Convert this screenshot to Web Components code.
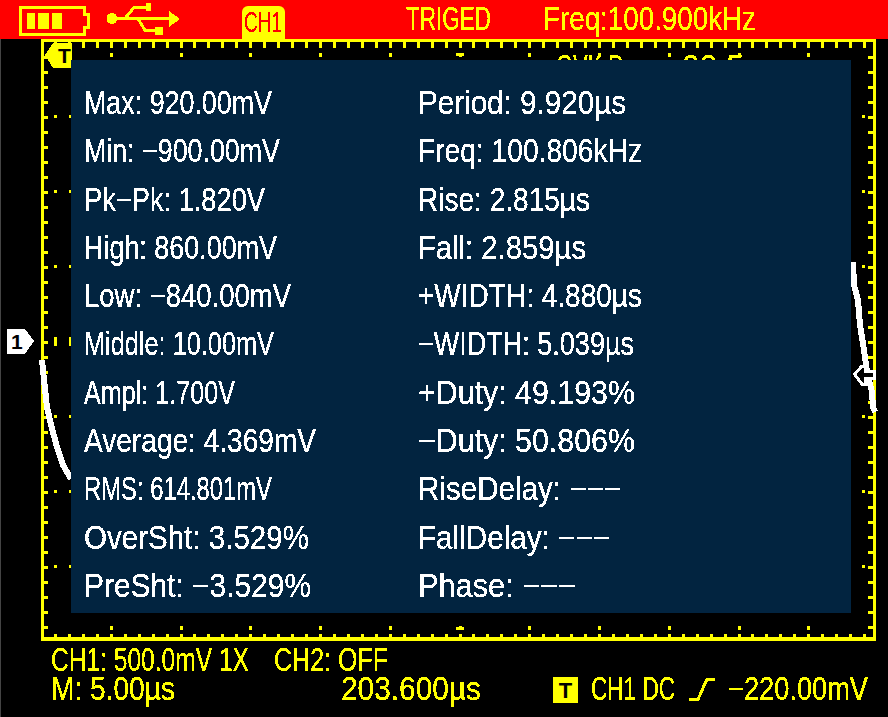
<!DOCTYPE html>
<html>
<head>
<meta charset="utf-8">
<title>Scope measurements</title>
<style>
	html, body { margin: 0; background: #000; }
	body { font-family: "Liberation Sans", sans-serif; }
</style>
</head>
<body>
<osc-screen>
	<osc-header slot="header"></osc-header>
	<osc-plot slot="plot">
		<osc-readout>
			<osc-text w="188">Max: 920.00mV</osc-text><osc-text w="208">Period: 9.920µs</osc-text>
			<osc-text w="196">Min: −900.00mV</osc-text><osc-text w="224">Freq: 100.806kHz</osc-text>
			<osc-text w="181">Pk−Pk: 1.820V</osc-text><osc-text w="172">Rise: 2.815µs</osc-text>
			<osc-text w="193">High: 860.00mV</osc-text><osc-text w="168">Fall: 2.859µs</osc-text>
			<osc-text w="207">Low: −840.00mV</osc-text><osc-text w="224">+WIDTH: 4.880µs</osc-text>
			<osc-text w="190">Middle: 10.00mV</osc-text><osc-text w="216">−WIDTH: 5.039µs</osc-text>
			<osc-text w="151">Ampl: 1.700V</osc-text><osc-text w="217">+Duty: 49.193%</osc-text>
			<osc-text w="232">Average: 4.369mV</osc-text><osc-text w="217">−Duty: 50.806%</osc-text>
			<osc-text w="188">RMS: 614.801mV</osc-text><osc-text w="203">RiseDelay: −−−</osc-text>
			<osc-text w="225">OverSht: 3.529%</osc-text><osc-text w="192">FallDelay: −−−</osc-text>
			<osc-text w="227">PreSht: −3.529%</osc-text><osc-text w="158">Phase: −−−</osc-text>
		</osc-readout>
	</osc-plot>
	<osc-footer slot="footer"></osc-footer>
</osc-screen>

<script>
'use strict'

// text squeezed to the width it has on the scope, the filter hardens the edges like the lcd font
class OscText extends HTMLElement {
	constructor() {
		super()
		this.attachShadow({ mode: 'open' }).innerHTML = `
			<style>
				:host {
					display: block;
					height: var(--lh, 29px);
					line-height: var(--lh, 29px);
					font-family: "Liberation Sans", sans-serif;
					font-size: var(--fs, 33px);
					white-space: nowrap;
				}
				div { filter: url(#lcd); }
				span {
					display: inline-block;
					transform-origin: 0 0;
				}
			</style>
			<svg width="0" height="0" style="position:absolute">
				<filter id="lcd" filterUnits="userSpaceOnUse" x="-6" y="-12" width="300" height="72" color-interpolation-filters="sRGB">
					<feGaussianBlur in="SourceGraphic" stdDeviation="0.500"/>
					<feComponentTransfer>
						<feFuncA type="discrete" tableValues="0 1 1"/>
					</feComponentTransfer>
				</filter>
			</svg>
			<div><span><slot></slot></span></div>`
	}

	connectedCallback() {
		const w = Number(this.getAttribute('w'))
		this.style.width = `${w}px`
		const span = this.shadowRoot.querySelector('span')
		span.style.transform = `scaleX(${w / span.getBoundingClientRect().width})`
	}
}

class OscScreen extends HTMLElement {
	constructor() {
		super()
		this.attachShadow({ mode: 'open' }).innerHTML = `
			<style>
				:host {
					display: flex;
					flex-direction: column;
					width: 888px;
					height: 717px;
					background: #000;
					box-shadow: inset 1px 0 #444;
					overflow: hidden;
				}
			</style>
			<slot name="header"></slot>
			<slot name="plot"></slot>
			<slot name="footer"></slot>`
	}
}

class OscHeader extends HTMLElement {
	constructor() {
		super()
		this.attachShadow({ mode: 'open' }).innerHTML = `
			<style>
				:host {
					display: flex;
					align-items: flex-start;
					height: 39px;
					background: #f00;
					color: #ff0;
					--lh: 37px;
				}
				svg { flex: none; shape-rendering: crispEdges; }
				.battery { margin: 6px 0 0 19px; }
				.usb { margin: 3px 0 0 16px; }
				.tab {
					box-sizing: border-box;
					width: 43px;
					height: 33px;
					margin: 6px 0 0 61px;
					padding-left: 2px;
					background: #ff0;
					color: #f00;
					border-radius: 6px 6px 0 0;
					--lh: 33px;
					--fs: 29px;
				}
				.state { margin-left: 121px; }
				.freq { margin-left: 52px; }
			</style>
			<svg class="battery" width="72" height="30" viewBox="0 0 72 30" fill="#ff0">
				<path fill-rule="evenodd" d="M0 0h67v7h4v16h-4v7H0zM3 3v24h61v-7h4V10h-4V3z"/>
				<path d="M8 7h8v16H8zM19 7h11v16H19zM33 7h10v16H33z"/>
			</svg>
			<svg class="usb" width="74" height="34" viewBox="0 0 74 34" fill="none" stroke="#ff0" stroke-width="3">
				<circle cx="5" cy="15.500" r="5.500" fill="#ff0" stroke="none"/>
				<path d="M6 15.500h58"/>
				<path d="M18 15.500 27 4.500h14"/>
				<path d="M31 15.500 38 27.500h11"/>
				<path d="M62 8 73 16 62 24z" fill="#ff0" stroke="none"/>
				<rect x="39" y="0" width="5" height="8" fill="#ff0" stroke="none"/>
				<rect x="48" y="24" width="8" height="8" fill="#ff0" stroke="none"/>
			</svg>
			<div class="tab"><osc-text w="38">CH1</osc-text></div>
			<osc-text class="state" w="85">TRIGED</osc-text>
			<osc-text class="freq" w="213">Freq:100.900kHz</osc-text>`
	}
}

// the graticule with its ticks, the trace and the markers sit in the svg, the readout goes over it
class OscPlot extends HTMLElement {
	constructor() {
		super()
		const ticks = []
		const stepX = 69.75 / 5
		// coordinates are the ones of the page, viewBox moves them into the box
		for (let i = 0; i <= 59; i++) {
			const x = Math.round(41 + stepX * i) + 0.5
			if (x < 46 || x > 873) continue
			ticks.push(`M${x - 1.5} 42h3v6h-3z`)
			ticks.push(`M${x - 1.5} 634h3v10h-3z`)
			if (i % 5 === 0) {
				ticks.push(`M${x - 1.5} 53h3v4h-3z`)
				ticks.push(`M${x - 1.5} 626h3v4h-3z`)
			}
		}
		for (let y = 56; y < 636; y += 15) {
			ticks.push(`M44 ${y}h4v3h-4z`)
			ticks.push(`M868 ${y}h5v3h-5z`)
		}
		for (let k = 0; k <= 6; k++) {
			const y = 115 + 75 * k
			const tall = k === 3
			for (const x of [54, 69, 862]) ticks.push(`M${x} ${tall ? y - 3 : y}h3v${tall ? 9 : 3}h-3z`)
		}
		this.attachShadow({ mode: 'open' }).innerHTML = `
			<style>
				:host {
					display: block;
					position: relative;
					width: 888px;
					height: 602px;
				}
				svg { display: block; shape-rendering: crispEdges; }
				text { font-family: "Liberation Sans", sans-serif; font-weight: bold; font-size: 21px; }
				.behind {
					position: absolute;
					top: 13px;
					color: #ff0;
				}
				.a { left: 556px; }
				.b { left: 682px; }
			</style>
			<svg width="888" height="602" viewBox="0 39 888 602">
				<path d="M41 39h835v602H41zM44 42v595h829V42z" fill="#ff0" fill-rule="evenodd"/>
				<path d="${ticks.join('')}" fill="#ff0"/>
				<path d="M456 53h8v3h-8zM456 627h8v3h-8z" fill="#ff0"/>
				<path d="M42 360 44 380 47 407 51 425 57 447 63 465 71 479" fill="none" stroke="#fff" stroke-width="6"/>
				<path d="M853 262 854 285 858 300 860 325 864 350 867 372 872 392 873 407 875 412" fill="none" stroke="#fff" stroke-width="6"/>
				<path d="M854.500 374 862 366h3v5h9v7h-9v6h-3z" fill="#000" stroke="#fff" stroke-width="3"/>
				<path d="M45 55 53 43h19v25H53z" fill="#ff0"/>
				<text x="58" y="63" fill="#000">T</text>
				<path d="M7 329h18l9 12-9 13H7z" fill="#fff"/>
				<text x="11" y="349" fill="#000">1</text>
			</svg>
			<osc-text class="behind a" w="68">OVK D</osc-text>
			<osc-text class="behind b" w="62">00 5</osc-text>
			<slot></slot>`
	}
}

class OscReadout extends HTMLElement {
	constructor() {
		super()
		this.attachShadow({ mode: 'open' }).innerHTML = `
			<style>
				:host {
					position: absolute;
					left: 71px;
					top: 21px;
					width: 780px;
					height: 553px;
					box-sizing: border-box;
					padding: 19px 0 0 13px;
					display: grid;
					grid-template-columns: 334px 1fr;
					grid-auto-rows: 48.300px;
					background: #022440;
					color: #fff;
					--lh: 48.300px;
				}
			</style>
			<slot></slot>`
	}
}

class OscFooter extends HTMLElement {
	constructor() {
		super()
		this.attachShadow({ mode: 'open' }).innerHTML = `
			<style>
				:host {
					display: grid;
					grid-template-columns: 290px 212px 38px 98px 39px 1fr;
					grid-auto-rows: 29px;
					padding: 4px 0 0 51px;
					color: #ff0;
				}
				.first { grid-column: 1 / -1; display: flex; gap: 25px; }
				svg { shape-rendering: crispEdges; }
				.trig {
					width: 25px;
					height: 26px;
					margin-top: 3px;
				}
				.trig text { font: bold 22px "Liberation Sans", sans-serif; }
				.edge { margin-top: 3px; }
			</style>
			<div class="first">
				<osc-text w="198">CH1: 500.0mV 1X</osc-text>
				<osc-text w="114">CH2: OFF</osc-text>
			</div>
			<osc-text w="124">M: 5.00µs</osc-text>
			<osc-text w="140">203.600µs</osc-text>
			<svg class="trig" viewBox="0 0 25 26"><rect width="25" height="26" fill="#ff0"/><text x="12.500" y="21" text-anchor="middle" fill="#000">T</text></svg>
			<osc-text w="84">CH1 DC</osc-text>
			<svg class="edge" width="27" height="24" viewBox="0 0 27 24" fill="none" stroke="#ff0" stroke-width="3"><path d="M0 22.500h9L18 2h8"/></svg>
			<osc-text w="140">−220.00mV</osc-text>`
	}
}

customElements.define('osc-text', OscText)
customElements.define('osc-header', OscHeader)
customElements.define('osc-plot', OscPlot)
customElements.define('osc-readout', OscReadout)
customElements.define('osc-footer', OscFooter)
customElements.define('osc-screen', OscScreen)
</script>
</body>
</html>
